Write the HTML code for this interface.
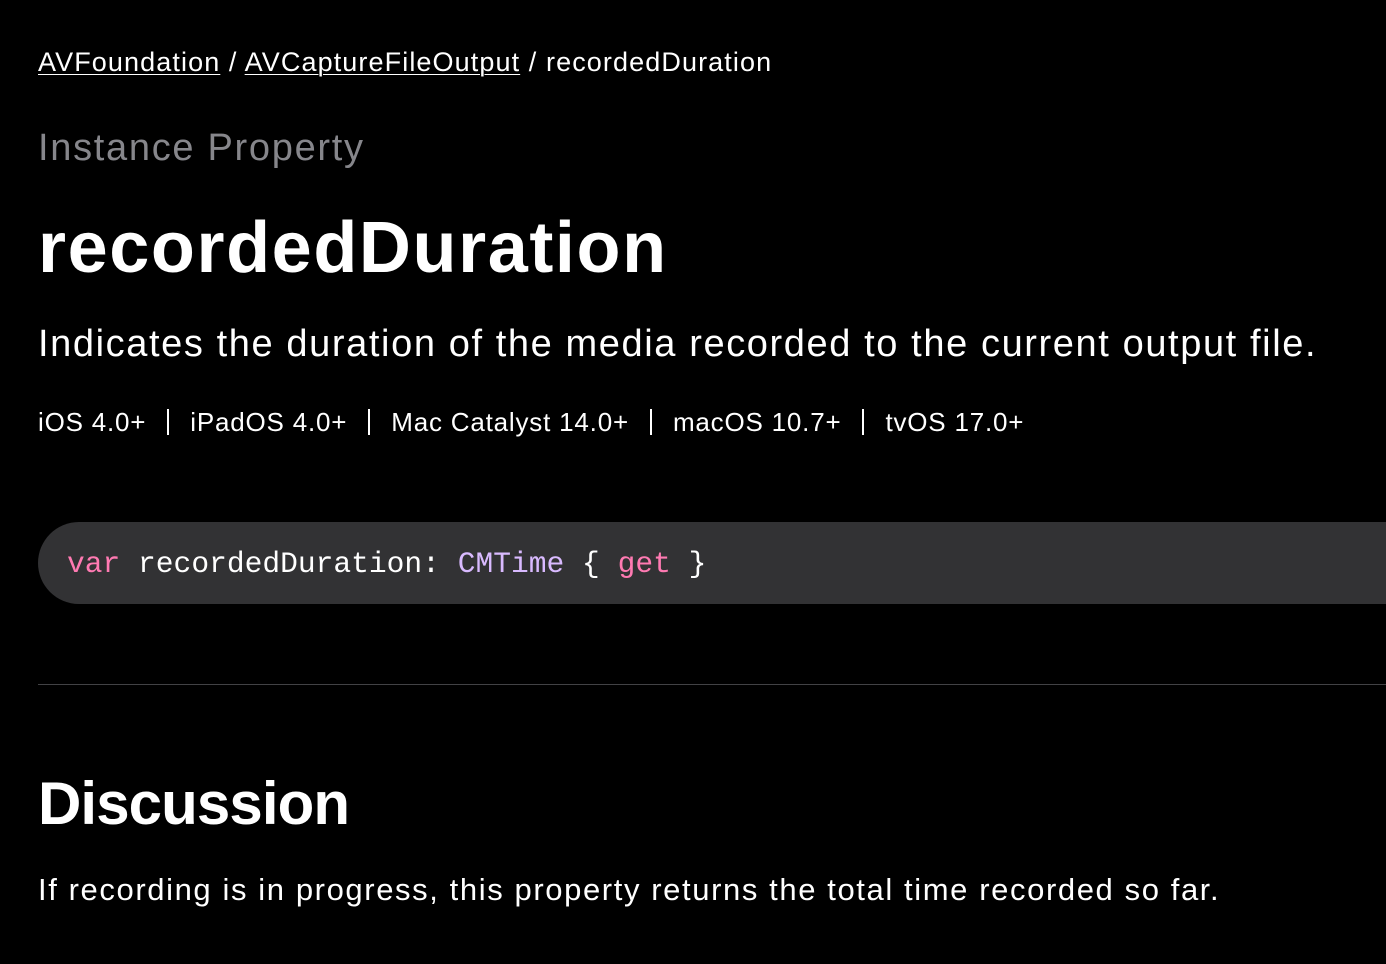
<!DOCTYPE html>
<html><head><style>
html,body{margin:0;background:#000;width:1386px;height:964px;overflow:hidden;font-family:"Liberation Sans",sans-serif;color:#fff}
.a{position:absolute;left:38px;white-space:nowrap}
.bc{top:44px;font-size:27px;line-height:36px;letter-spacing:1.1px}
.bc u{text-decoration:underline;text-underline-offset:3px;text-decoration-thickness:1px}
.ip{top:126px;font-size:38px;color:#86868b;line-height:44px;letter-spacing:1.7px}
.t{top:206px;font-size:72px;font-weight:bold;line-height:84px;letter-spacing:1.6px}
.ab{top:320px;font-size:38px;line-height:48px;letter-spacing:1.6px}
.pl{top:404px;font-size:26px;line-height:36px;letter-spacing:0.8px}
.pl span.s{display:inline-block;width:2px;height:26px;background:#fff;vertical-align:-4px;margin:0 21px}
.code{position:absolute;left:38px;top:522px;width:1400px;height:82px;background:#323234;border-radius:41px}
.code div{position:absolute;left:29px;top:22px;font-family:"Liberation Mono",monospace;font-size:29.6px;line-height:40px;color:#fff}
.k{color:#ff7ab2}.ty{color:#d9baff}
.hr{position:absolute;left:38px;top:684px;width:1348px;height:1px;background:#424245}
.d{top:768px;font-size:60px;font-weight:bold;line-height:72px;letter-spacing:-0.9px}
.p{top:870px;font-size:31px;line-height:40px;letter-spacing:1.6px}
</style></head><body>
<div class="a bc"><u>AVFoundation</u> / <u>AVCaptureFileOutput</u> / recordedDuration</div>
<div class="a ip">Instance Property</div>
<div class="a t">recordedDuration</div>
<div class="a ab">Indicates the duration of the media recorded to the current output file.</div>
<div class="a pl">iOS 4.0+<span class="s"></span>iPadOS 4.0+<span class="s"></span>Mac Catalyst 14.0+<span class="s"></span>macOS 10.7+<span class="s"></span>tvOS 17.0+</div>
<div class="code"><div><span class="k">var</span> recordedDuration: <span class="ty">CMTime</span> { <span class="k">get</span> }</div></div>
<div class="hr"></div>
<div class="a d">Discussion</div>
<div class="a p">If recording is in progress, this property returns the total time recorded so far.</div>
</body></html>
